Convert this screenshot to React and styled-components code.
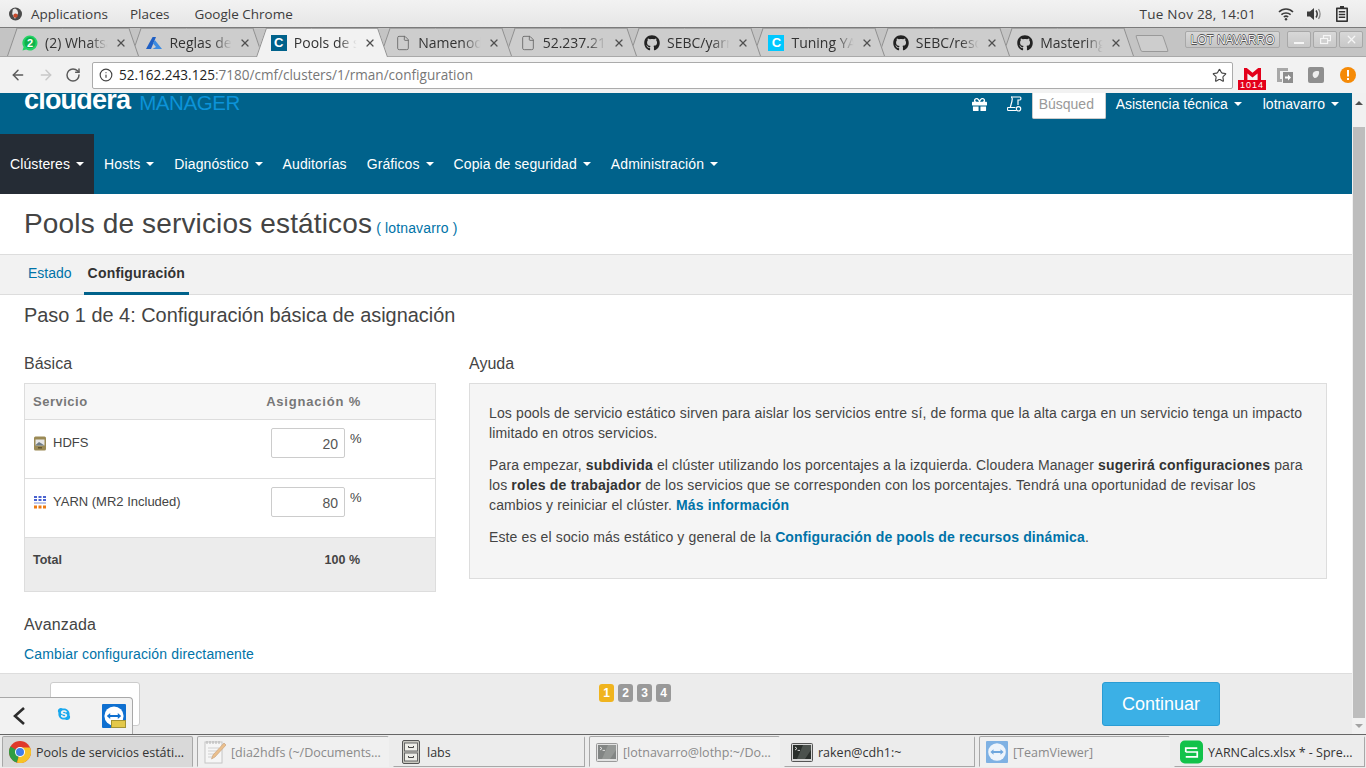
import React from 'react';
import styled, { createGlobalStyle } from 'styled-components';
import { ArrowLeft, ArrowRight, RotateCw, Info, Star, File, X } from 'lucide-react';
import { FaGithub, FaGift, FaSkype } from 'react-icons/fa';

const GlobalStyle = createGlobalStyle`
	html, body { margin: 0; padding: 0; height: 100%; overflow: hidden; }
	body { font-family: "Liberation Sans", Arial, sans-serif; font-size: 14px; color: #333; background: #fff; }
	* { box-sizing: border-box; }
`;

const uiFont = `"Open Sans", "Noto Sans", sans-serif`;

const Screen = styled.div`
	width: 1366px;
	height: 768px;
	display: flex;
	flex-direction: column;
	overflow: hidden;
	position: relative;
`;

/* desktop top bar */
const SystemBar = styled.div`
	height: 28px;
	flex: none;
	display: flex;
	align-items: center;
	padding: 0 10px 0 9px;
	background: linear-gradient(#f2f2f2, #e6e6e6);
	border-bottom: 1px solid #7b7b7b;
	font-family: ${uiFont};
	font-size: 13.5px;
	color: #3c3c3c;
`;

const SystemMenu = styled.span`
	margin-left: ${(p) => p.$gap}px;
`;

const Clock = styled.span`
	margin-left: auto;
	margin-right: 22px;
	letter-spacing: 0.25px;
`;

const TrayIcons = styled.div`
	display: flex;
	align-items: center;
	gap: 13px;
	margin-right: 8px;
`;

/* chrome tab strip */
const TabStrip = styled.div`
	height: 29px;
	flex: none;
	display: flex;
	background: #c4c4c4;
	border-bottom: 1px solid #a9a9a9;
	padding-left: 7px;
	position: relative;
`;

const Tab = styled.div`
	position: relative;
	flex: none;
	width: 132px;
	height: 28px;
	margin-right: -7.6px;
	display: flex;
	align-items: center;
	padding: 1px 0 0 15px;
	z-index: ${(p) => (p.$active ? 20 : p.$z)};
	font-family: ${uiFont};
	font-size: 14px;
	color: #333;

	&::before,
	&::after {
		content: '';
		position: absolute;
		top: 0;
		bottom: ${(p) => (p.$active ? '-1px' : '0')};
		width: 50%;
		background: ${(p) => (p.$active ? '#f2f2f2' : '#cdcdcd')};
		border-top: 1px solid #a4a4a4;
		z-index: -1;
	}
	&::before {
		left: 0;
		border-left: 1px solid #8f8f8f;
		transform: skewX(-19deg);
		transform-origin: bottom left;
	}
	&::after {
		right: 0;
		border-right: 1px solid #8f8f8f;
		transform: skewX(19deg);
		transform-origin: bottom right;
	}
`;

const TabIcon = styled.span`
	width: 16px;
	height: 16px;
	flex: none;
	display: flex;
	align-items: center;
	justify-content: center;
	color: #222;
`;

const TabTitle = styled.span`
	width: 64px;
	margin-left: 7px;
	white-space: nowrap;
	overflow: hidden;
	-webkit-mask-image: linear-gradient(to right, #000 70%, transparent 98%);
	mask-image: linear-gradient(to right, #000 70%, transparent 98%);
`;

const TabClose = styled.span`
	margin-left: 6px;
	width: 12px;
	display: flex;
	color: #505050;
`;

const CBadge = styled.span`
	width: 16px;
	height: 16px;
	display: flex;
	align-items: center;
	justify-content: center;
	background: ${(p) => p.$bg};
	color: #fff;
	font: bold 13px "Liberation Sans", sans-serif;
`;

const NewTab = styled.div`
	width: 28px;
	height: 17px;
	margin: 7px 0 0 11px;
	flex: none;
	background: #cdcdcd;
	border: 1px solid #999;
	border-radius: 2px;
	transform: skewX(19deg);
`;

const WindowControls = styled.div`
	margin-left: auto;
	margin-right: 3px;
	margin-top: 3px;
	display: flex;
	gap: 2px;
`;

const ProfileBadge = styled.div`
	width: 95px;
	height: 17px;
	margin-right: 5px;
	display: flex;
	align-items: center;
	justify-content: center;
	background: linear-gradient(#d8d8d8, #c4c4c4);
	border: 1px solid #a8a8a8;
	border-radius: 2px;
	font: 12px "Liberation Sans", sans-serif;
	color: #f4f4f4;
	text-shadow: 0.6px 0 0 #555, -0.6px 0 0 #555, 0 0.6px 0 #555, 0 -0.6px 0 #555;
	white-space: nowrap;
`;

const WindowButton = styled.div`
	width: 24px;
	height: 17px;
	display: flex;
	align-items: center;
	justify-content: center;
	background: linear-gradient(#d8d8d8, #c8c8c8);
	border: 1px solid #a8a8a8;
	border-radius: 2px;
	color: #f5f5f5;
`;

/* chrome toolbar */
const Toolbar = styled.div`
	height: 36px;
	flex: none;
	display: flex;
	align-items: center;
	padding-left: 10px;
	background: #f2f2f2;
`;

const NavButton = styled.span`
	width: 16px;
	height: 16px;
	margin-right: ${(p) => p.$gap}px;
	flex: none;
	display: flex;
	color: ${(p) => p.$color};
`;

const Omnibox = styled.div`
	width: 1141px;
	height: 27px;
	flex: none;
	display: flex;
	align-items: center;
	padding: 0 0 0 6px;
	background: #fff;
	border: 1px solid #ababab;
	border-radius: 2px;
	font-family: ${uiFont};
	font-size: 13.55px;
	color: #777;
`;

const UrlHost = styled.span`
	margin-left: 6px;
	color: #222;
`;

const StarSlot = styled.span`
	margin-left: auto;
	margin-right: 4px;
	width: 16px;
	display: flex;
	color: #444;
`;

const Extensions = styled.div`
	flex: 1;
	display: flex;
	align-items: center;
	padding-left: 5px;
`;

const GmailBadge = styled.div`
	width: 28px;
	height: 22px;
	flex: none;
	display: flex;
	flex-direction: column;
	align-items: center;
	margin: 7px 10px 0 0;
`;

const GmailCount = styled.span`
	width: 28px;
	height: 10px;
	background: #e3001b;
	color: #fff;
	font: 9px/10px "Liberation Sans", sans-serif;
	text-align: center;
	letter-spacing: 1px;
`;

const ExtIcon = styled.span`
	width: 18px;
	height: 18px;
	flex: none;
	display: flex;
	align-items: center;
	justify-content: center;
	margin-right: ${(p) => p.$gap}px;
`;

/* page */
const Viewport = styled.div`
	flex: 1;
	min-height: 0;
	display: flex;
`;

const Page = styled.div`
	flex: 1;
	min-width: 0;
	display: flex;
	flex-direction: column;
`;

const Scrollbar = styled.div`
	width: 14px;
	flex: none;
	display: flex;
	flex-direction: column;
	align-items: center;
	background: #f1f1f1;
`;

const ScrollArrow = styled.div`
	width: 0;
	height: 0;
	flex: none;
	margin: ${(p) => p.$margin};
	border-left: 4px solid transparent;
	border-right: 4px solid transparent;
	${(p) => (p.$up ? 'border-bottom: 4px solid #505050;' : 'border-top: 4px solid #a3a3a3;')}
`;

const ScrollThumb = styled.div`
	width: 12px;
	height: 591px;
	background: #bdbdbd;
`;

const Header = styled.header`
	height: 101px;
	flex: none;
	display: flex;
	flex-direction: column;
	background: #00628b;
`;

const TopRow = styled.div`
	height: 41px;
	display: flex;
	align-items: flex-start;
	padding-left: 24px;
	overflow: hidden;
`;

const Logo = styled.div`
	display: flex;
	align-items: baseline;
	margin-top: -9px;
	font-size: 27px;
	line-height: 32px;
`;

const LogoBrand = styled.span`
	color: #fff;
	font-weight: bold;
	letter-spacing: -0.8px;
`;

const LogoProduct = styled.span`
	margin-left: 9px;
	color: #0c93d8;
	font-size: 20.5px;
	letter-spacing: -0.4px;
	transform: translateY(1px);
`;

const TopActions = styled.div`
	margin-left: auto;
	height: 26px;
	display: flex;
	align-items: center;
	color: #fff;
`;

const TopIcon = styled.span`
	width: 16px;
	display: flex;
	margin-right: ${(p) => p.$gap}px;
	padding-bottom: 4px;
`;

const SearchBox = styled.div`
	width: 74px;
	height: 26px;
	padding: 3px 0 0 6px;
	background: #fff;
	border: 1px solid #ccc;
	border-top: none;
	border-radius: 0 0 2px 2px;
	color: #999;
	overflow: hidden;
	white-space: nowrap;
`;

const TopMenu = styled.span`
	margin-left: ${(p) => p.$gap}px;
	padding-bottom: 4px;
	display: flex;
	align-items: center;
`;

const Caret = styled.span`
	display: inline-block;
	width: 0;
	height: 0;
	margin-left: ${(p) => p.$gap || 6}px;
	border-left: 4px solid transparent;
	border-right: 4px solid transparent;
	border-top: 4px solid #fff;
`;

const NavBar = styled.nav`
	height: 60px;
	display: flex;
	letter-spacing: 0.1px;
`;

const NavItem = styled.a`
	display: flex;
	align-items: center;
	padding: 0 10px;
	color: #fff;
	background: ${(p) => (p.$active ? '#252c35' : 'transparent')};
`;

const TitleRow = styled.div`
	height: 60px;
	flex: none;
	display: flex;
	align-items: baseline;
	padding: 13px 0 0 24px;
`;

const PageTitle = styled.h1`
	margin: 0;
	font-size: 28px;
	line-height: 34px;
	font-weight: normal;
	letter-spacing: 0.15px;
	color: #444;
`;

const Link = styled.a`
	color: #0073a8;
	font-weight: ${(p) => (p.$bold ? 'bold' : 'normal')};
`;

const TitleUser = styled(Link)`
	margin-left: 4px;
	letter-spacing: 0.15px;
`;

const TabBar = styled.div`
	height: 41px;
	flex: none;
	display: flex;
	padding-left: 24px;
	background: #f2f2f2;
	border-top: 1px solid #ddd;
	border-bottom: 1px solid #ddd;
`;

const PageTab = styled.a`
	height: 40px;
	display: flex;
	align-items: center;
	padding: 0 4px 2px;
	margin-right: 8px;
	border-bottom: ${(p) => (p.$active ? '3px solid #00628b' : '3px solid transparent')};
	font-weight: ${(p) => (p.$active ? 'bold' : 'normal')};
	letter-spacing: ${(p) => (p.$active ? '0.2px' : '0')};
	color: ${(p) => (p.$active ? '#333' : '#0073a8')};
`;

const Content = styled.main`
	flex: 1;
	min-height: 0;
	padding: 0 26px 0 24px;
`;

const StepTitle = styled.h2`
	margin: 0;
	padding-top: 8px;
	height: 59px;
	font-size: 19.9px;
	line-height: 24px;
	font-weight: normal;
	color: #444;
`;

const Columns = styled.div`
	display: grid;
	grid-template-columns: 412px 858px;
	column-gap: 33px;
`;

const SectionTitle = styled.h3`
	margin: 0 0 9px;
	font-size: 16px;
	line-height: 20px;
	font-weight: normal;
	color: #444;
`;

const Table = styled.div`
	border: 1px solid #ddd;
`;

const TableRow = styled.div`
	height: ${(p) => p.$h}px;
	display: grid;
	grid-template-columns: 238px 1fr;
	padding-left: 8px;
	background: ${(p) => p.$bg || '#fff'};
	border-top: ${(p) => (p.$first ? 'none' : '1px solid #ddd')};
`;

const HeadCell = styled.div`
	display: flex;
	align-items: center;
	font-size: 13px;
	font-weight: bold;
	color: #777;
	letter-spacing: 0.5px;
	white-space: nowrap;
`;

const HeadPercent = styled(HeadCell)`
	justify-content: flex-end;
	margin-left: -10px;
	padding-right: 74px;
	letter-spacing: 0.8px;
`;

const ServiceCell = styled.div`
	display: flex;
	align-items: flex-start;
	gap: 6px;
	padding-top: 15px;
	font-size: 13px;
	line-height: 16px;
	color: #444;
`;

const ServiceIcon = styled.span`
	width: 14px;
	height: 16px;
	flex: none;
	display: flex;
	align-items: center;
	justify-content: center;
`;

const InputCell = styled.div`
	display: flex;
	align-items: flex-start;
	padding-top: 8px;
`;

const PercentInput = styled.input`
	width: 74px;
	height: 30px;
	padding: 2px 6px 0 0;
	border: 1px solid #ccc;
	border-radius: 2px;
	font: 14px "Liberation Sans", sans-serif;
	color: #555;
	text-align: right;
	outline: none;
`;

const PercentSign = styled.span`
	margin: 3px 0 0 5px;
	font-size: 13px;
	line-height: 16px;
	color: #444;
`;

const TotalCell = styled.div`
	padding-top: 15px;
	font-size: 12.5px;
	line-height: 14px;
	font-weight: bold;
	color: #444;
`;

const TotalValue = styled(TotalCell)`
	text-align: right;
	padding-right: 75px;
`;

const HelpBox = styled.div`
	height: 196px;
	padding: 19px 19px 0;
	background: #f5f5f5;
	border: 1px solid #ddd;
	line-height: 20px;
	letter-spacing: 0.13px;
	color: #444;

	p {
		margin: 0 0 12px;
	}
	b {
		color: #333;
		letter-spacing: 0.2px;
	}
`;

const Advanced = styled.div`
	padding-top: 23px;
	line-height: 20px;
	letter-spacing: 0.15px;
`;

const Footer = styled.footer`
	height: 61px;
	flex: none;
	display: grid;
	grid-template-columns: 50px 549px 1fr auto;
	padding: 8px 132px 0 0;
	background: #ececec;
	border-top: 1px solid #ddd;
`;

const BackButton = styled.div`
	grid-column: 2;
	width: 90px;
	height: 44px;
	background: #fff;
	border: 1px solid #ccc;
	border-radius: 3px;
`;

const Pager = styled.div`
	display: flex;
	gap: 4px;
	padding-top: 2px;
`;

const PagerStep = styled.span`
	width: 15px;
	height: 18px;
	display: flex;
	align-items: center;
	justify-content: center;
	background: ${(p) => (p.$active ? '#f0b41e' : '#999')};
	border-radius: 3px;
	color: #fff;
	font-size: 12px;
	font-weight: bold;
`;

const ContinueButton = styled.div`
	width: 118px;
	height: 44px;
	display: flex;
	align-items: center;
	justify-content: center;
	background: #3bb0e6;
	border: 1px solid #2a9cd4;
	border-radius: 3px;
	color: #fff;
	font-size: 18px;
`;

/* tray popup laid over the page */
const TrayPopup = styled.div`
	position: absolute;
	left: 0;
	bottom: 34px;
	width: 133px;
	height: 37px;
	display: flex;
	align-items: center;
	background: #f2f2f2;
	border: 1px solid #a8a8a8;
	border-left: none;
	border-bottom: none;
	border-radius: 0 4px 0 0;
`;

const TraySlot = styled.span`
	display: flex;
	margin-left: ${(p) => p.$gap}px;
	margin-bottom: ${(p) => p.$lift || 0}px;
	color: ${(p) => p.$color || '#333'};
`;

/* window list */
const Taskbar = styled.div`
	height: 34px;
	flex: none;
	display: flex;
	gap: 4px;
	padding: 1px 0 1px 2px;
	background: #ececec;
	border-top: 1px solid #666;
`;

const Task = styled.div`
	width: ${(p) => p.$w}px;
	height: 31px;
	flex: none;
	display: flex;
	align-items: center;
	padding-left: ${(p) => p.$pad || 6}px;
	padding-top: 1px;
	gap: 5px;
	font-family: ${uiFont};
	font-size: 12.5px;
	white-space: nowrap;
	overflow: hidden;
	border-radius: 2px 2px 0 0;
	color: ${(p) => (p.$state === 'min' ? '#8a8a8a' : '#333')};
	background: ${(p) => (p.$state === 'active' ? '#d9d9d9' : p.$state === 'min' ? '#f0f0f0' : '#ececec')};
	border: 1px solid ${(p) => (p.$state === 'plain' ? 'transparent' : '#a8a8a8')};
	border-bottom-color: ${(p) => (p.$state === 'plain' ? '#a8a8a8' : 'transparent')};
	border-right-color: ${(p) => (p.$state === 'min' ? 'transparent' : '#a8a8a8')};
`;

const TaskIcon = styled.span`
	width: ${(p) => p.$w || 22}px;
	height: 22px;
	flex: none;
	display: flex;
	align-items: center;
	justify-content: center;
`;

const WifiIcon = () => (
	<svg width="16" height="14" viewBox="0 0 16 14" fill="none" stroke="#3c3c3c" strokeWidth="1.6">
		<path d="M1 5 C5 1 11 1 15 5" />
		<path d="M3.4 7.6 C6 5.4 10 5.4 12.6 7.6" />
		<path d="M5.8 10 C7 9 9 9 10.2 10" />
		<circle cx="8" cy="12.2" r="1.2" fill="#3c3c3c" stroke="none" />
	</svg>
);

const VolumeIcon = () => (
	<svg width="16" height="14" viewBox="0 0 16 14" fill="none">
		<path d="M0 4.5 H3 L7 1 V13 L3 9.5 H0 Z" fill="#3c3c3c" />
		<path d="M9 3.5 C10.4 5.5 10.4 8.5 9 10.5" stroke="#3c3c3c" strokeWidth="1.5" />
		<path d="M11.5 2 C13.4 5 13.4 9 11.5 12" stroke="#8a8a8a" strokeWidth="1.3" />
	</svg>
);

const BatteryIcon = () => (
	<svg width="12" height="16" viewBox="0 0 12 16">
		<path d="M4 0 H8 V1.5 H11 C11.6 1.5 12 1.9 12 2.5 V15 C12 15.6 11.6 16 11 16 H1 C0.4 16 0 15.6 0 15 V2.5 C0 1.9 0.4 1.5 1 1.5 H4 Z" fill="#333" />
		<rect x="1.6" y="3.2" width="8.8" height="11.2" fill="#f0f0f0" />
		<path d="M2.8 5 H9.2 V6.5 H2.8 Z M2.8 7.8 H9.2 V9.3 H2.8 Z M2.8 10.6 H9.2 V12.1 H2.8 Z" fill="#333" />
	</svg>
);

const FootIcon = () => (
	<svg width="13" height="14" viewBox="0 0 13 14">
		<circle cx="6.5" cy="7" r="6.5" fill="#4a4a4a" />
		<path d="M3.8 2.6 L6 1.5 L8.2 3 L9.2 6 L6 12 L3.2 7 Z" fill="#e8e8e8" />
		<circle cx="6.5" cy="8.6" r="2.2" fill="#c94a2b" />
	</svg>
);

const WhatsappIcon = () => (
	<svg width="16" height="16" viewBox="0 0 16 16">
		<path d="M8 .5 A7.5 7.5 0 1 1 4.2 14.5 L.5 15.5 L1.6 12 A7.5 7.5 0 0 1 8 .5 Z" fill="#25d366" />
		<circle cx="8" cy="7.7" r="5.6" fill="#0fb14b" />
		<text x="8" y="11.5" textAnchor="middle" fontSize="11" fontWeight="bold" fontFamily="Liberation Sans" fill="#fff">2</text>
	</svg>
);

const AzureIcon = () => (
	<svg width="16" height="14" viewBox="0 0 16 14">
		<path d="M6.6 1 H10 L5 13 H0 L3.8 6 Z" fill="#1f5fc4" />
		<path d="M8.8 4 L16 13 H6.4 L10 11 L7 7.6 Z" fill="#3d8be0" />
	</svg>
);

const ScrollIcon = () => (
	<svg width="15" height="16" viewBox="0 0 15 16" fill="none" stroke="#fff" strokeWidth="1.2">
		<path d="M4 1 H13 C14.2 1 14.2 4 13 4 H11 V9" />
		<path d="M4 1 C5.4 1 5.4 3 5 5 L3.4 11" />
		<path d="M1 11.5 H8.5 M1 14.5 H9.5" />
		<path d="M1 11.5 C0 12.5 0 13.5 1 14.5" />
		<circle cx="11.5" cy="12.8" r="2.2" />
	</svg>
);

const GmailIcon = () => (
	<svg width="17" height="12" viewBox="0 0 17 12">
		<rect width="17" height="12" fill="#f4f4f4" />
		<path d="M0 0 H2.800 L8.500 4.800 L14.200 0 H17 V12 H13.600 V5.400 L8.500 9.600 L3.400 5.400 V12 H0 Z" fill="#e3001b" />
	</svg>
);

const TeamViewerIcon = ({ badge, faded }) => (
	<svg width="24" height="24" viewBox="0 0 24 24">
		<rect width="24" height="24" rx="1" fill={faded ? '#7fb1e3' : '#0e6fd0'} />
		<circle cx="12" cy="12" r="9.6" fill={faded ? '#eef4fb' : '#fff'} />
		<path d="M4.8 12 L8.2 9 V11 H15.8 V9 L19.2 12 L15.8 15 V13 H8.2 V15 Z" fill={faded ? '#6ea6dd' : '#0e6fd0'} />
		{badge && <rect x="9.5" y="16.5" width="14" height="7" fill="#e3c84a" stroke="#a39334" strokeWidth="1" />}
	</svg>
);

const ChromeIcon = () => (
	<svg width="22" height="22" viewBox="0 0 22 22">
		<circle cx="11" cy="11" r="11" fill="#e0392b" />
		<path d="M11 11 L1.5 5.5 A11 11 0 0 0 8 21.6 Z" fill="#2f9e44" />
		<path d="M11 11 L8 21.6 A11 11 0 0 0 21 6.4 L11 6.4 Z" fill="#f7c325" />
		<circle cx="11" cy="11" r="5" fill="#fff" />
		<circle cx="11" cy="11" r="4" fill="#3f7fe8" />
	</svg>
);

const NotepadIcon = ({ dim }) => (
	<svg width="22" height="24" viewBox="0 0 22 24" opacity={dim ? 0.6 : 1}>
		<rect x="1" y="2" width="17" height="21" fill="#fafafa" stroke="#aaa" />
		<path d="M3 1 V4 M6 1 V4 M9 1 V4 M12 1 V4 M15 1 V4" stroke="#888" />
		<path d="M4 8 H15 M4 11 H15 M4 14 H11 M4 17 H9" stroke="#bbb" />
		<path d="M20 3 L22 5 L11 17 L7.5 19 L9 15 Z" fill="#e8a04c" stroke="#a5672a" strokeWidth="0.6" />
	</svg>
);

const CabinetIcon = () => (
	<svg width="18" height="24" viewBox="0 0 18 24">
		<rect x="0.5" y="0.5" width="17" height="23" rx="1.5" fill="#c9c9c0" stroke="#555" />
		<rect x="2.5" y="3" width="13" height="8" fill="#eeeee8" stroke="#666" />
		<rect x="2.5" y="13" width="13" height="8" fill="#eeeee8" stroke="#666" />
		<path d="M6.5 6 V7.5 H11.5 V6 M6.5 16 V17.5 H11.5 V16" fill="none" stroke="#444" />
	</svg>
);

const TerminalIcon = ({ dim }) => (
	<svg width="22" height="19" viewBox="0 0 22 19" opacity={dim ? 0.55 : 1}>
		<rect x="0.5" y="0.5" width="21" height="18" rx="1" fill="#d8d8d8" stroke="#555" />
		<rect x="2" y="2" width="18" height="14" fill="#2a2f2c" />
		<path d="M12 2 H20 V7 L14 16 H6 Z" fill="#4b514d" />
		<path d="M4 4 L6 5.5 L4 7 M6.6 7.4 H9" fill="none" stroke="#fff" strokeWidth="0.8" />
	</svg>
);

const SheetIcon = () => (
	<svg width="24" height="24" viewBox="0 0 24 24">
		<rect width="24" height="24" rx="5" fill="#12c24a" />
		<path d="M6 12 H18 V17 H6" fill="none" stroke="#fff" strokeWidth="1.8" />
		<path d="M18 8 H6 V12" fill="none" stroke="#fff" strokeWidth="1.8" />
	</svg>
);

const HdfsIcon = () => (
	<svg width="12" height="15" viewBox="0 0 12 15">
		<rect y="0.5" width="12" height="14" rx="1.5" fill="#9b8a55" />
		<rect x="1.5" y="3.5" width="9" height="6" fill="#e6e6e6" />
		<path d="M1.5 9 L5 6 L7.5 7.5 L10.5 9.5 H1.5 Z" fill="#6f7c86" />
		<rect x="4" y="11" width="4" height="1.5" fill="#5f5330" />
	</svg>
);

const YarnIcon = () => (
	<svg width="12" height="13" viewBox="0 0 12 13">
		<path d="M0 0 H3 V2 H0 Z M4.500 0 H7.500 V2 H4.500 Z M9 0 H12 V2 H9 Z M0 3 H3 V5 H0 Z M4.500 3 H7.500 V5 H4.500 Z M9 3 H12 V5 H9 Z" fill="#4a63d0" />
		<rect y="6.500" width="12" height="1" fill="#7a8fd8" />
		<path d="M0 9.500 H3 V12.500 H0 Z M4.500 9.500 H7.500 V12.500 H4.500 Z M9 9.500 H12 V12.500 H9 Z" fill="#ee7a12" />
	</svg>
);

const tabs = [
	{ title: '(2) Whatsapp', icon: <WhatsappIcon /> },
	{ title: 'Reglas de entrada', icon: <AzureIcon /> },
	{ title: 'Pools de servicios', icon: <CBadge $bg="#00628b">C</CBadge>, active: true },
	{ title: 'Namenode', icon: <File size={16} color="#666" strokeWidth={1.3} /> },
	{ title: '52.237.21.10', icon: <File size={16} color="#666" strokeWidth={1.3} /> },
	{ title: 'SEBC/yarn', icon: <FaGithub size={16} /> },
	{ title: 'Tuning YARN', icon: <CBadge $bg="#00c8ff">C</CBadge> },
	{ title: 'SEBC/resources', icon: <FaGithub size={16} /> },
	{ title: 'Mastering', icon: <FaGithub size={16} /> },
];

const navItems = ['Hosts', 'Diagnóstico', 'Auditorías', 'Gráficos', 'Copia de seguridad', 'Administración'];
const noCaret = ['Auditorías'];

const tasks = [
	{ label: 'Pools de servicios estáti...', icon: <ChromeIcon />, state: 'active', w: 191 },
	{ label: '[dia2hdfs (~/Documents...', icon: <NotepadIcon dim />, state: 'min', w: 192 },
	{ label: 'labs', icon: <CabinetIcon />, state: 'plain', w: 192 },
	{ label: '[lotnavarro@lothp:~/Do...', icon: <TerminalIcon dim />, state: 'min', w: 191 },
	{ label: 'raken@cdh1:~', icon: <TerminalIcon />, state: 'plain', w: 191 },
	{ label: '[TeamViewer]', icon: <TeamViewerIcon faded />, state: 'min', w: 191 },
	{ label: 'YARNCalcs.xlsx * - Spre...', icon: <SheetIcon />, state: 'plain', w: 191, pad: 5, iconW: 23 },
];

const App = () => {
	return (
		<Screen>
			<GlobalStyle />
			<SystemBar>
				<FootIcon />
				<SystemMenu $gap={9}>Applications</SystemMenu>
				<SystemMenu $gap={22}>Places</SystemMenu>
				<SystemMenu $gap={25}>Google Chrome</SystemMenu>
				<Clock>Tue Nov 28, 14:01</Clock>
				<TrayIcons>
					<WifiIcon />
					<VolumeIcon />
					<BatteryIcon />
				</TrayIcons>
			</SystemBar>

			<TabStrip>
				{tabs.map((tab, i) => (
					<Tab key={tab.title} $active={tab.active} $z={tabs.length - i}>
						<TabIcon>{tab.icon}</TabIcon>
						<TabTitle>{tab.title}</TabTitle>
						<TabClose>
							<X size={12} strokeWidth={2.4} />
						</TabClose>
					</Tab>
				))}
				<NewTab />
				<WindowControls>
					<ProfileBadge>LOT NAVARRO</ProfileBadge>
					<WindowButton>
						<svg width="10" height="10" viewBox="0 0 10 10"><rect y="7" width="10" height="2" fill="#f5f5f5" /></svg>
					</WindowButton>
					<WindowButton>
						<svg width="11" height="10" viewBox="0 0 11 10" fill="none" stroke="#f5f5f5" strokeWidth="1.2"><rect x="3.500" y="0.600" width="7" height="5" /><rect x="0.600" y="3.500" width="7" height="5" fill="#cfcfcf" /></svg>
					</WindowButton>
					<WindowButton>
						<X size={13} strokeWidth={2.4} />
					</WindowButton>
				</WindowControls>
			</TabStrip>

			<Toolbar>
				<NavButton $gap={12} $color="#5a5a5a"><ArrowLeft size={16} strokeWidth={2.2} /></NavButton>
				<NavButton $gap={11} $color="#c8c8c8"><ArrowRight size={16} strokeWidth={2.2} /></NavButton>
				<NavButton $gap={11} $color="#5a5a5a"><RotateCw size={16} strokeWidth={2.2} /></NavButton>
				<Omnibox>
					<Info size={14} color="#444" strokeWidth={2} />
					<UrlHost>52.162.243.125</UrlHost>
					<span>:7180/cmf/clusters/1/rman/configuration</span>
					<StarSlot><Star size={15} strokeWidth={1.8} /></StarSlot>
				</Omnibox>
				<Extensions>
					<GmailBadge>
						<GmailIcon />
						<GmailCount>1014</GmailCount>
					</GmailBadge>
					<ExtIcon $gap={13}>
						<svg width="16" height="16" viewBox="0 0 16 16">
							<path d="M0 1 H11 V4 H3 V12 H5 V15 H0 Z" fill="#a8a8a8" />
							<rect x="6" y="5" width="10" height="11" fill="#8e8e8e" />
							<path d="M8 9.500 H11 V7.500 L14 10.500 L11 13.500 V11.500 H8 Z" fill="#fff" />
						</svg>
					</ExtIcon>
					<ExtIcon $gap={14}>
						<svg width="16" height="16" viewBox="0 0 16 16">
							<rect width="16" height="16" rx="2" fill="#8f8f8f" />
							<path d="M5 6 C6 4 10 3.500 11 4.500 C11.500 7 10 10.500 7 11 C5.500 11 4 8.500 5 6 Z" fill="#eee" />
						</svg>
					</ExtIcon>
					<ExtIcon>
						<svg width="16" height="16" viewBox="0 0 16 16">
							<circle cx="8" cy="8" r="8" fill="#f58a07" />
							<rect x="7" y="3" width="2" height="6.500" fill="#fff" />
							<rect x="7" y="11" width="2" height="2" fill="#fff" />
						</svg>
					</ExtIcon>
				</Extensions>
			</Toolbar>

			<Viewport>
				<Page>
					<Header>
						<TopRow>
							<Logo>
								<LogoBrand>cloudera</LogoBrand>
								<LogoProduct>MANAGER</LogoProduct>
							</Logo>
							<TopActions>
								<TopIcon $gap={19}><FaGift size={15} /></TopIcon>
								<TopIcon $gap={9}><ScrollIcon /></TopIcon>
								<SearchBox>Búsqued</SearchBox>
								<TopMenu $gap={10}>Asistencia técnica<Caret /></TopMenu>
								<TopMenu $gap={21}>lotnavarro<Caret $gap={6} /></TopMenu>
								<TopMenu $gap={13} />
							</TopActions>
						</TopRow>
						<NavBar>
							<NavItem $active>Clústeres<Caret /></NavItem>
							{navItems.map((item) => (
								<NavItem key={item}>
									{item}
									{!noCaret.includes(item) && <Caret />}
								</NavItem>
							))}
						</NavBar>
					</Header>

					<TitleRow>
						<PageTitle>Pools de servicios estáticos</PageTitle>
						<TitleUser>( lotnavarro )</TitleUser>
					</TitleRow>

					<TabBar>
						<PageTab>Estado</PageTab>
						<PageTab $active>Configuración</PageTab>
					</TabBar>

					<Content>
						<StepTitle>Paso 1 de 4: Configuración básica de asignación</StepTitle>
						<Columns>
							<div>
								<SectionTitle>Básica</SectionTitle>
								<Table>
									<TableRow $h={35} $bg="#f7f7f7" $first>
										<HeadCell>Servicio</HeadCell>
										<HeadPercent>Asignación %</HeadPercent>
									</TableRow>
									<TableRow $h={59}>
										<ServiceCell><ServiceIcon><HdfsIcon /></ServiceIcon>HDFS</ServiceCell>
										<InputCell>
											<PercentInput readOnly value="20" />
											<PercentSign>%</PercentSign>
										</InputCell>
									</TableRow>
									<TableRow $h={59}>
										<ServiceCell><ServiceIcon><YarnIcon /></ServiceIcon>YARN (MR2 Included)</ServiceCell>
										<InputCell>
											<PercentInput readOnly value="80" />
											<PercentSign>%</PercentSign>
										</InputCell>
									</TableRow>
									<TableRow $h={54} $bg="#ececec">
										<TotalCell>Total</TotalCell>
										<TotalValue>100 %</TotalValue>
									</TableRow>
								</Table>
							</div>
							<div>
								<SectionTitle>Ayuda</SectionTitle>
								<HelpBox>
									<p>Los pools de servicio estático sirven para aislar los servicios entre sí, de forma que la alta carga en un servicio tenga un impacto limitado en otros servicios.</p>
									<p>Para empezar, <b>subdivida</b> el clúster utilizando los porcentajes a la izquierda. Cloudera Manager <b>sugerirá configuraciones</b> para los <b>roles de trabajador</b> de los servicios que se corresponden con los porcentajes. Tendrá una oportunidad de revisar los cambios y reiniciar el clúster. <Link $bold>Más información</Link></p>
									<p>Este es el socio más estático y general de la <Link $bold>Configuración de pools de recursos dinámica</Link>.</p>
								</HelpBox>
							</div>
						</Columns>
						<Advanced>
							<SectionTitle>Avanzada</SectionTitle>
							<Link>Cambiar configuración directamente</Link>
						</Advanced>
					</Content>

					<Footer>
						<BackButton />
						<Pager>
							<PagerStep $active>1</PagerStep>
							<PagerStep>2</PagerStep>
							<PagerStep>3</PagerStep>
							<PagerStep>4</PagerStep>
						</Pager>
						<ContinueButton>Continuar</ContinueButton>
					</Footer>
				</Page>
				<Scrollbar>
					<ScrollArrow $up $margin="8px 0 22px" />
					<ScrollThumb />
					<ScrollArrow $margin="6px 0 0" />
				</Scrollbar>
			</Viewport>

			<TrayPopup>
				<TraySlot $gap={12}>
					<svg width="14" height="20" viewBox="0 0 14 20" fill="none" stroke="#2c2c2c" strokeWidth="2.6"><path d="M12 2 L3 10 L12 18" /></svg>
				</TraySlot>
				<TraySlot $gap={31} $color="#18a8ee" $lift={4}><FaSkype size={14} /></TraySlot>
				<TraySlot $gap={31}><TeamViewerIcon badge /></TraySlot>
			</TrayPopup>

			<Taskbar>
				{tasks.map((task) => (
					<Task key={task.label} $w={task.w} $state={task.state} $pad={task.pad}>
						<TaskIcon $w={task.iconW}>{task.icon}</TaskIcon>
						{task.label}
					</Task>
				))}
			</Taskbar>
		</Screen>
	);
};

export default App;
